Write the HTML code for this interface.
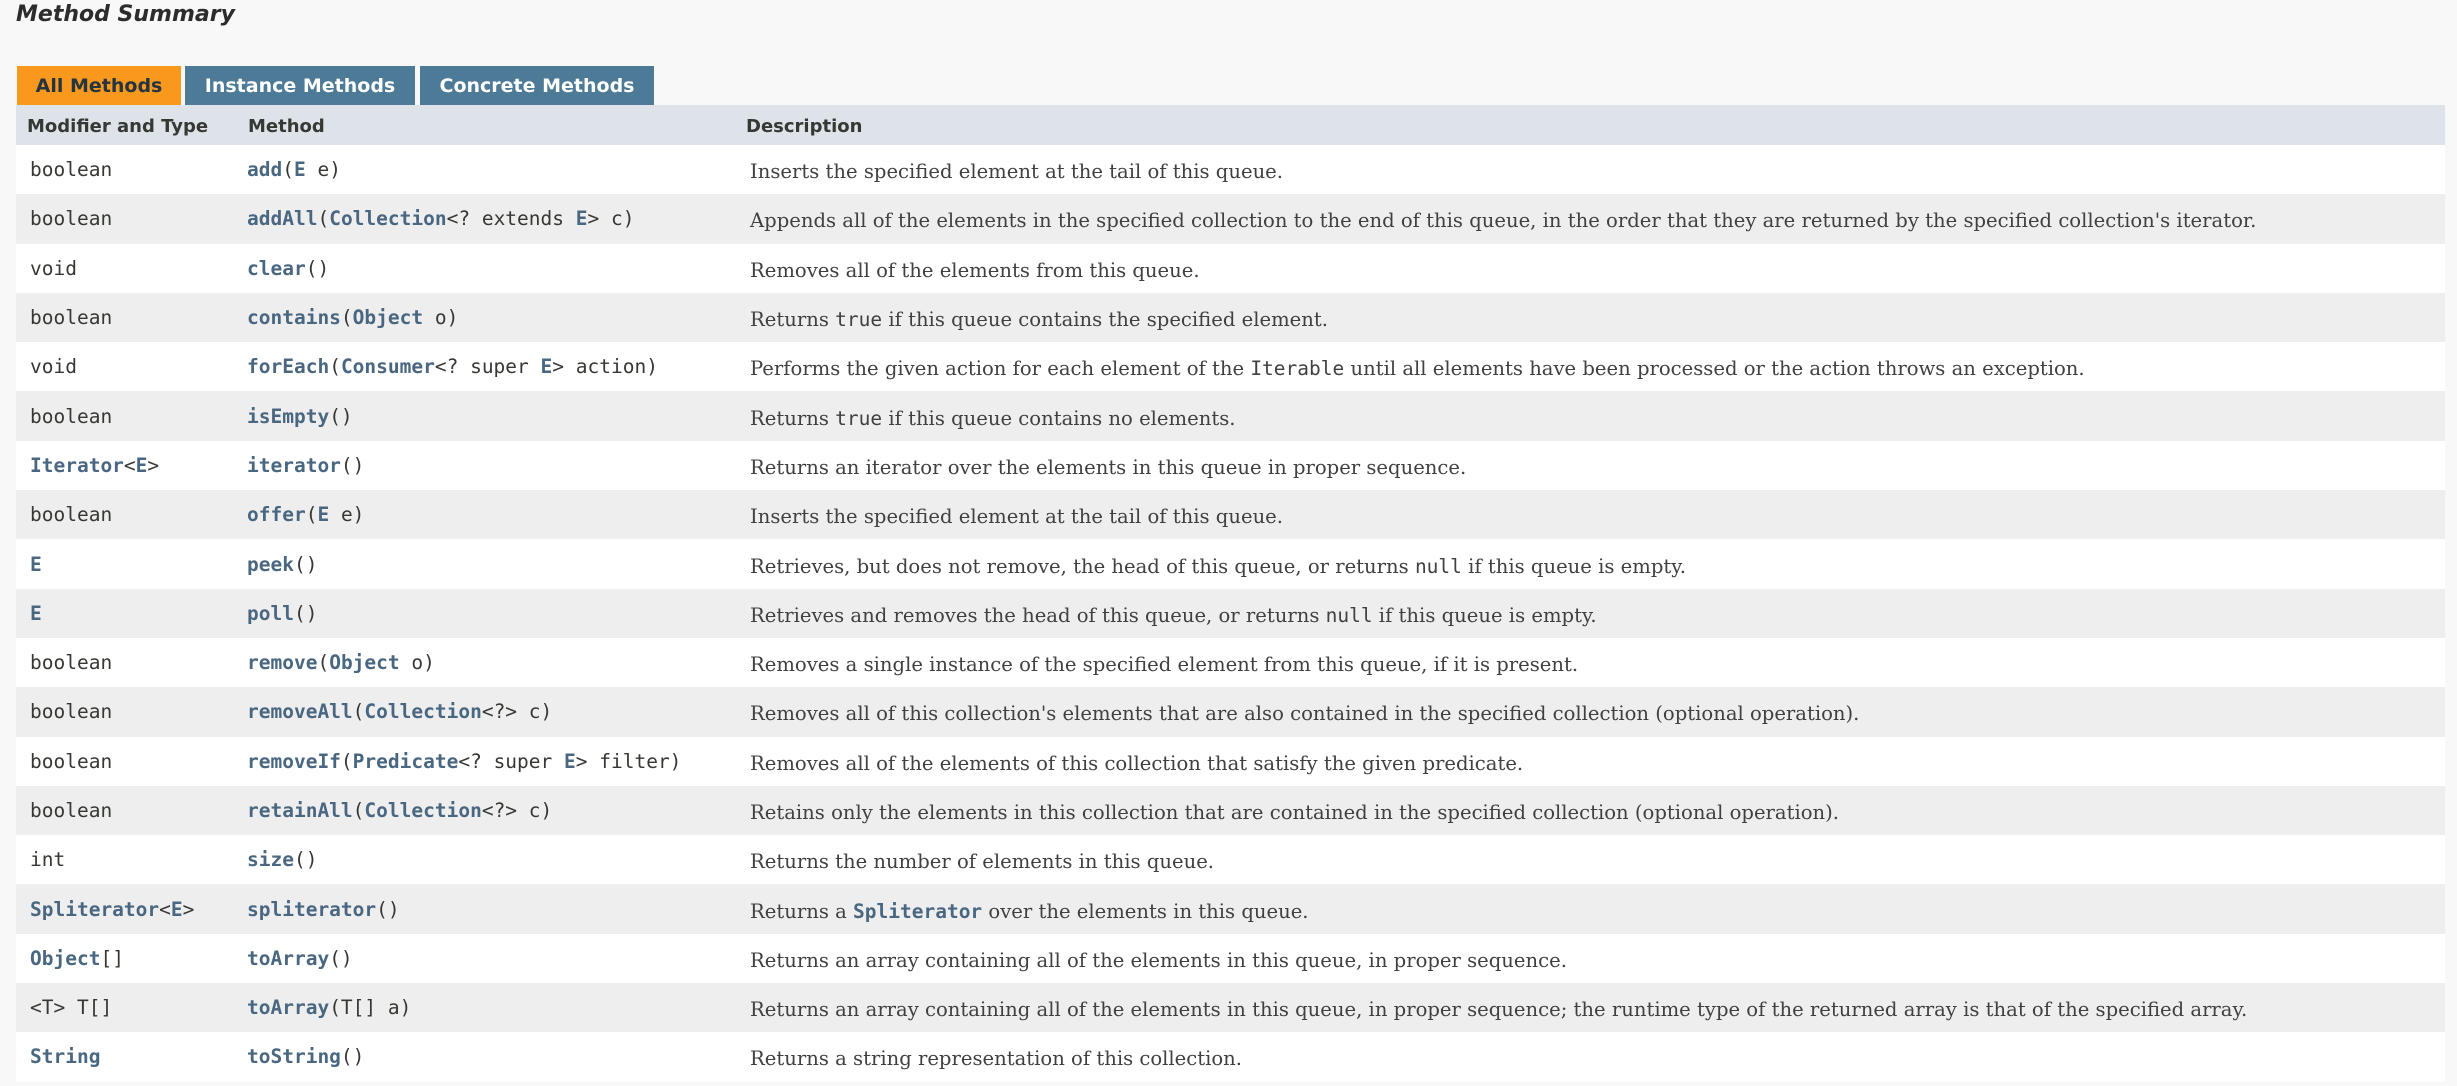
<!DOCTYPE html>
<html><head><style>
*{margin:0;padding:0;box-sizing:border-box}
body{width:2457px;height:1086px;background:#f8f8f8;font-family:"DejaVu Sans",sans-serif;color:#353833;overflow:hidden;position:relative}
h3{position:absolute;left:16px;top:2px;font-size:22px;font-style:italic;font-weight:bold;color:#2c2c2c}
.tab{position:absolute;top:66px;height:39px;color:#fff;font-weight:bold;font-size:19px;line-height:41px;text-align:center}
table{position:absolute;left:16px;top:105px;width:2429px;border-collapse:collapse}
th{background:#dee3e9;height:40px;text-align:left;font-size:18px;font-weight:bold;padding-left:11px;padding-top:3px;color:#353833}
td{height:49.3px;font-family:"DejaVu Sans Mono",monospace;font-size:19.5px;padding-left:14px;white-space:nowrap}
tr:nth-child(even) td{background:#fff}
tr:nth-child(odd) td{background:#eeeeee}
td.d{font-family:"DejaVu Serif",serif;font-size:19.6px;padding-left:4px;padding-top:4px;color:#404040}
td.d code{font-family:"DejaVu Sans Mono",monospace;font-size:19.5px}
b{color:#4a6782}
.c1{width:217px}.c2{width:513px}
</style></head><body>
<h3>Method Summary</h3>
<div class="tab" style="left:17px;width:164px;background:#f8981d;color:#253441">All Methods</div>
<div class="tab" style="left:185px;width:230px;background:#4d7a97">Instance Methods</div>
<div class="tab" style="left:420px;width:234px;background:#4d7a97">Concrete Methods</div>
<table>
<tr><th class="c1">Modifier and Type</th><th class="c2" style="padding-left:15px">Method</th><th style="padding-left:0">Description</th></tr>
<tr><td>boolean</td><td><b>add</b>(<b>E</b> e)</td><td class="d">Inserts the specified element at the tail of this queue.</td></tr>
<tr><td>boolean</td><td><b>addAll</b>(<b>Collection</b>&lt;? extends <b>E</b>&gt; c)</td><td class="d">Appends all of the elements in the specified collection to the end of this queue, in the order that they are returned by the specified collection's iterator.</td></tr>
<tr><td>void</td><td><b>clear</b>()</td><td class="d">Removes all of the elements from this queue.</td></tr>
<tr><td>boolean</td><td><b>contains</b>(<b>Object</b> o)</td><td class="d">Returns <code>true</code> if this queue contains the specified element.</td></tr>
<tr><td>void</td><td><b>forEach</b>(<b>Consumer</b>&lt;? super <b>E</b>&gt; action)</td><td class="d">Performs the given action for each element of the <code>Iterable</code> until all elements have been processed or the action throws an exception.</td></tr>
<tr><td>boolean</td><td><b>isEmpty</b>()</td><td class="d">Returns <code>true</code> if this queue contains no elements.</td></tr>
<tr><td><b>Iterator</b>&lt;<b>E</b>&gt;</td><td><b>iterator</b>()</td><td class="d">Returns an iterator over the elements in this queue in proper sequence.</td></tr>
<tr><td>boolean</td><td><b>offer</b>(<b>E</b> e)</td><td class="d">Inserts the specified element at the tail of this queue.</td></tr>
<tr><td><b>E</b></td><td><b>peek</b>()</td><td class="d">Retrieves, but does not remove, the head of this queue, or returns <code>null</code> if this queue is empty.</td></tr>
<tr><td><b>E</b></td><td><b>poll</b>()</td><td class="d">Retrieves and removes the head of this queue, or returns <code>null</code> if this queue is empty.</td></tr>
<tr><td>boolean</td><td><b>remove</b>(<b>Object</b> o)</td><td class="d">Removes a single instance of the specified element from this queue, if it is present.</td></tr>
<tr><td>boolean</td><td><b>removeAll</b>(<b>Collection</b>&lt;?&gt; c)</td><td class="d">Removes all of this collection's elements that are also contained in the specified collection (optional operation).</td></tr>
<tr><td>boolean</td><td><b>removeIf</b>(<b>Predicate</b>&lt;? super <b>E</b>&gt; filter)</td><td class="d">Removes all of the elements of this collection that satisfy the given predicate.</td></tr>
<tr><td>boolean</td><td><b>retainAll</b>(<b>Collection</b>&lt;?&gt; c)</td><td class="d">Retains only the elements in this collection that are contained in the specified collection (optional operation).</td></tr>
<tr><td>int</td><td><b>size</b>()</td><td class="d">Returns the number of elements in this queue.</td></tr>
<tr><td><b>Spliterator</b>&lt;<b>E</b>&gt;</td><td><b>spliterator</b>()</td><td class="d">Returns a <code><b>Spliterator</b></code> over the elements in this queue.</td></tr>
<tr><td><b>Object</b>[]</td><td><b>toArray</b>()</td><td class="d">Returns an array containing all of the elements in this queue, in proper sequence.</td></tr>
<tr><td>&lt;T&gt; T[]</td><td><b>toArray</b>(T[] a)</td><td class="d">Returns an array containing all of the elements in this queue, in proper sequence; the runtime type of the returned array is that of the specified array.</td></tr>
<tr><td><b>String</b></td><td><b>toString</b>()</td><td class="d">Returns a string representation of this collection.</td></tr>
</table>
</body></html>
